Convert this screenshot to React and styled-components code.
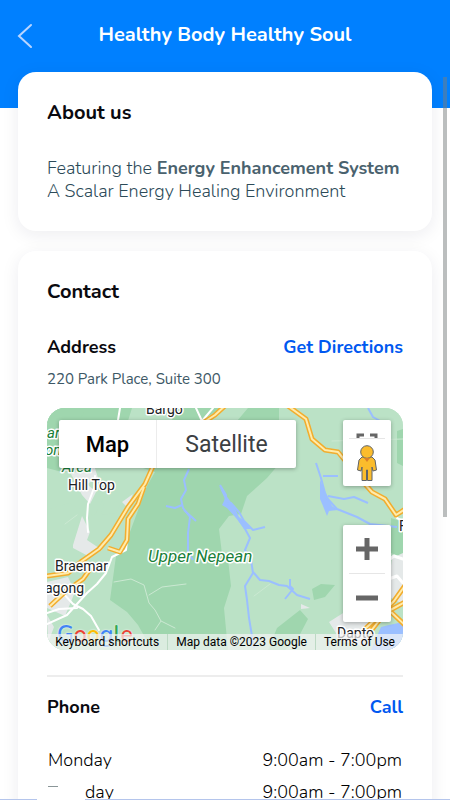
import React from "react";
import styled, { createGlobalStyle } from "styled-components";

const GlobalStyle = createGlobalStyle`
  * { box-sizing: border-box; }
  body { margin: 0; background: #fff; font-family: "Nunito", "Lato", sans-serif; color: #0a0a0f; }
  button { font: inherit; border: 0; padding: 0; background: none; cursor: pointer; }
  h1, h2, h3, p, dl, dt, dd { margin: 0; }
`;

const Page = styled.div`
  position: relative;
  height: 100vh;
  overflow: hidden;
  background: #fff;
`;

const Header = styled.header`
  display: grid;
  grid-template-columns: 50px 1fr 50px;
  align-items: center;
  height: 108px;
  padding-bottom: 36px;
  background: #0080ff;
`;

const BackButton = styled.button`
  display: flex;
  justify-content: center;
  color: #b9d5ff;
`;

const Title = styled.h1`
  padding-bottom: 2px;
  font-size: 20px;
  line-height: 28px;
  font-weight: 700;
  text-align: center;
  color: #fff;
`;

const Cards = styled.main`
  display: flex;
  flex-direction: column;
  gap: 20px;
  margin-top: -36px;
  padding: 0 18px;
`;

const Card = styled.section`
  padding: 28px 29px;
  border-radius: 18px;
  background: #fff;
  box-shadow: 0 4px 18px rgba(30, 30, 70, 0.08);
`;

const CardTitle = styled.h2`
  font-size: 20px;
  line-height: 26px;
  font-weight: 700;
`;

const Intro = styled.p`
  margin-top: 31px;
  font-size: 18px;
  line-height: 23px;
  font-weight: 300;
  color: #2c4a58;

  strong {
    font-weight: 700;
    color: #4a626e;
  }
`;

const Row = styled.div`
  display: flex;
  justify-content: space-between;
  align-items: center;
  font-size: 18px;
  line-height: 24px;
`;

const AddressRow = styled(Row)`
  margin-top: 30px;
`;

const Label = styled.h3`
  font-size: 18px;
  font-weight: 700;
`;

const ActionLink = styled.a`
  font-weight: 700;
  color: #0058f0;
  text-decoration: none;
`;

const Street = styled.p`
  margin: 10px 0 19px;
  font-size: 15px;
  line-height: 20px;
  color: #3d5866;
`;

const MapFrame = styled.div`
  position: relative;
  height: 242px;
  overflow: hidden;
  border-radius: 18px;
  background: #bbe2c6;
  font-family: Roboto, sans-serif;
`;

const MapDrawing = styled.svg`
  display: block;
  width: 100%;
  height: 100%;
`;

const MapTypes = styled.div`
  position: absolute;
  top: 12px;
  left: 12px;
  display: flex;
  height: 48px;
  border-radius: 2px;
  overflow: hidden;
  background: #fff;
  box-shadow: 0 1px 4px rgba(0, 0, 0, 0.3);
`;

const MapType = styled.button`
  width: ${(p) => (p.$active ? 98 : 139)}px;
  font-size: ${(p) => (p.$active ? 22 : 23)}px;
  font-weight: ${(p) => (p.$active ? 500 : 400)};
  color: ${(p) => (p.$active ? "#000" : "#3c4043")};
  border-right: ${(p) => (p.$active ? "1px solid #ececec" : "0")};
`;

const ControlStack = styled.div`
  position: absolute;
  right: 12px;
  ${(p) => (p.$low ? "bottom: 28px;" : "top: 12px;")}
  display: flex;
  flex-direction: column;
  align-items: center;
  width: 48px;
  border-radius: 2px;
  background: #fff;
  box-shadow: 0 1px 4px rgba(0, 0, 0, 0.3);
`;

const Control = styled.button`
  display: flex;
  align-items: center;
  justify-content: center;
  width: 36px;
  height: ${(p) => p.$height}px;
  & + & { border-top: 1px solid #e6e6e6; }
`;

const MapFooter = styled.div`
  position: absolute;
  right: 0;
  bottom: 0;
  left: 0;
  display: flex;
  justify-content: flex-end;
  height: 16px;
  font-size: 12px;
  line-height: 16px;
  color: #000;
`;

const FooterItem = styled.span`
  padding: 0 8px;
  background: rgba(245, 245, 245, 0.7);
  color: inherit;
  white-space: nowrap;
  & + & { border-left: 1px solid #bcd9c4; }
`;

const ShortcutsButton = styled.button`
  flex: 1;
  padding: 0 8px;
  background: rgba(245, 245, 245, 0.7);
  text-align: right;
  white-space: nowrap;
  border-right: 1px solid #bcd9c4;
`;

const PhoneRow = styled(Row)`
  margin-top: 25px;
  padding-top: 18px;
  border-top: 2px solid #ededed;
`;

const Hours = styled.dl`
  display: grid;
  grid-template-columns: 1fr auto;
  row-gap: 8px;
  margin-top: 29px;
  padding: 0 1px;
  font-size: 18px;
  line-height: 24px;
  font-weight: 300;
  color: #000;
`;

const Day = styled.dt`
  display: flex;
  align-items: center;
  gap: 27px;
`;

const Dash = styled.span`
  align-self: flex-start;
  width: 10px;
  height: 1px;
  margin-top: 6px;
  background: #8a9698;
`;

const ScrollThumb = styled.div`
  position: absolute;
  top: 77px;
  right: 3px;
  width: 4px;
  height: 55%;
  background: rgba(120, 125, 125, 0.5);
`;

const BottomEdge = styled.div`
  position: absolute;
  right: 0;
  bottom: 0;
  left: 0;
  height: 1px;
  background: linear-gradient(to right, #b4c5ec 37px, #fff 37px 85px, #b4c5ec 85px);
`;

const land = "#9fd6ae";
const water = "#9bbfff";

const roadPaths = [
  "M180 -4 L168 7 L148 20 M107 56 L98 76 L81 99 L64 127 L52 141 L35 153 L21 165 L0 168",
  "M97 79 L91 96 L81 111 L80 132 L73 144 L61 140",
  "M46 157 L36 171 L18 184 L3 198",
  "M241 -2 L259 11 L265 31 L278 42 L291 44 L310 67 L325 84 L338 91 L349 107 L360 100",
  "M362 172 L347 193 L335 205 L318 221 M360 193 L338 205 L320 228 M344 204 L360 219",
];

const riverPaths = [
  "M142 61 L137 72 L139 82 L134 91 L136 100 L143 109 L141 125 L141 145 L146 152",
  "M119 98 L128 100 L135 97 M137 102 L149 113",
  "M173 77 L179 87 L178 96 L184 95 L192 104 L197 113 L206 122 L218 119 M189 108 L197 119 L203 130 L198 142 L204 152 L206 165 L198 178 L200 192 L202 210 L207 240",
  "M206 164 L213 172 L222 173 L232 177 L240 178 L250 187 L263 191 M243 171 L243 178 L246 181 L238 191",
  "M269 55 L274 70 L279 89 L290 101 L310 109 L323 116 L350 119 M281 88 L297 91 L307 89 L321 95 M276 68 L291 68",
  "M321 0 L326 9 L335 14",
];

function MapBackground() {
  return (
    <MapDrawing viewBox="0 0 356 242" preserveAspectRatio="xMidYMid slice" role="img" aria-label="Map of Upper Nepean">
      <rect width="356" height="242" fill="#bbe2c6" />
      <path fill={land} d="M0 0H232V18L206 22L232 56L220 70L200 88L194 106L182 108L172 121L175 146L181 151L184 178L177 200L181 242H105L91 217L80 204L63 192L69 148L80 132L100 78L108 64L60 48L0 70Z" />
      <path fill="#bbe2c6" d="M85 0H130L122 18L150 15L175 0H201L190 13H120L105 28L80 16ZM0 60L30 68L38 84L52 75L58 88L47 108L22 95L0 102ZM57 96L75 93L69 105L54 107Z" />
      <path fill={land} d="M0 0L39 0L31 15L0 15ZM265 181L274 176L288 177L278 189L267 192ZM350 23L356 21V58L350 55ZM344 110L356 114V150L344 145ZM253 202L261 211L250 232L238 242H221L230 220Z" />
      <path fill={water} d="M172 78L181 90L188 100L192 109L199 114L204 121L197 121L190 111L180 100L175 97L178 91ZM273 72L277 81L281 89L285 98L291 102L282 103L280 108L276 98L273 91ZM334 219L342 217L356 214V242H324Z" />
      <g fill="#e5e9e9">
        <path d="M24 66L47 57L51 70L40 76L49 84L43 96L35 87ZM26 137L35 108L43 124L40 132L55 142L43 149L26 140ZM0 174L21 169L28 184L18 208L0 200ZM0 207L7 219L1 235ZM345 150L356 145V196L340 188ZM282 214L304 200L324 207L320 239L294 233Z" />
        <path d="M75 94L86 86L80 99ZM254 196L263 200L254 201Z" />
      </g>
      <g fill="none" stroke="#fff" strokeWidth="2" strokeLinecap="round" strokeLinejoin="round">
        <path d="M73 0L70 18M149 0L155 13L166 0M48 68L47 80L41 96L40 110L41 124M80 133L79 142L65 149L59 165L50 176L40 185L20 207L0 216M15 184L26 196L36 201L44 208L52 222M0 205L12 201L30 200" />
        <path stroke="#cbe8d2" strokeWidth="1" d="M67 174L84 171L97 177L102 195L108 202L114 213L108 222M102 187L115 179L139 176M114 213L128 220M30 107L18 116M207 188L223 176M285 33L356 31" />
        <path d="M338 91L350 110L356 113" />
        <path strokeWidth="3" d="M335 157L347 148L356 151M336 173L350 168L356 175" />
      </g>
      <g fill="none" stroke={water} strokeWidth="2" strokeLinejoin="round">
        {riverPaths.map((d) => <path key={d} d={d} />)}
      </g>
      <g fill="none" strokeLinejoin="round">
        {roadPaths.map((d) => <path key={d} d={d} stroke="#f2ad2e" strokeWidth="5" />)}
        {roadPaths.map((d) => <path key={d} d={d} stroke="#ffebab" strokeWidth="2" />)}
      </g>
      <g fontFamily="Roboto, sans-serif" fontSize="14" fill="#202124" stroke="#fff" strokeWidth="3" strokeLinejoin="round" paintOrder="stroke">
        <text x="99" y="6">Bargo</text>
        <text x="21" y="82">Hill Top</text>
        <text x="8" y="163">Braemar</text>
        <text x="-2" y="185">agong</text>
        <text x="290" y="230">Dapto</text>
        <text x="352" y="123">Fi</text>
        <g fill="#188038" fontStyle="italic">
          <text x="0" y="30" fontSize="15">ar</text>
          <text x="-2" y="47" fontSize="15">on</text>
          <text x="15" y="64" fontSize="15">Area</text>
          <text x="101" y="154" fontSize="17">Upper Nepean</text>
        </g>
      </g>
    </MapDrawing>
  );
}

const GoogleMark = styled.span`
  position: absolute;
  left: 10px;
  bottom: 2px;
  font-family: Nunito, sans-serif;
  font-size: 23px;
  line-height: 26px;
  font-weight: 600;
  text-shadow: 0 0 2px #fff;
`;

const Letter = styled.span`
  color: ${(p) => p.$color};
`;

const googleLetters = [["G", "#4285f4"], ["o", "#ea4335"], ["o", "#fbbc04"], ["g", "#4285f4"], ["l", "#34a853"], ["e", "#ea4335"]];

function AddressMap() {
  return (
    <MapFrame>
      <MapBackground />
      <GoogleMark>{googleLetters.map(([c, color], i) => <Letter key={i} $color={color}>{c}</Letter>)}</GoogleMark>
      <MapTypes>
        <MapType $active>Map</MapType>
        <MapType>Satellite</MapType>
      </MapTypes>
      <ControlStack>
        <Control $height={18} aria-label="Fullscreen">
          <svg width="22" height="18" fill="none" stroke="#666" strokeWidth="3"><path d="M2 19V15H8M14 15H20V19" /></svg>
        </Control>
        <Control $height={48} aria-label="Street View">
          <svg width="20" height="36" viewBox="0 0 20 36" stroke="#5f6368" strokeWidth="1" fill="#fbbc2c" strokeLinejoin="round">
            <path d="M5 12H15L18 15L19.5 25L16 26L15 22V35.5H10.5V25H9.5V35.5H5V22L4 26L0.5 25L2 15Z" />
            <circle cx="10" cy="7" r="6.3" />
            <path d="M7 13H13L10 17Z" fill="#dc7f29" stroke="none" />
          </svg>
        </Control>
      </ControlStack>
      <ControlStack $low>
        <Control $height={48} aria-label="Zoom in">
          <svg width="22" height="22" stroke="#666" strokeWidth="5"><path d="M0 11H22M11 0V22" /></svg>
        </Control>
        <Control $height={49} aria-label="Zoom out">
          <svg width="22" height="22" stroke="#666" strokeWidth="5"><path d="M0 11H22" /></svg>
        </Control>
      </ControlStack>
      <MapFooter>
        <ShortcutsButton>Keyboard shortcuts</ShortcutsButton>
        <FooterItem>Map data ©2023 Google</FooterItem>
        <FooterItem>Terms of Use</FooterItem>
      </MapFooter>
    </MapFrame>
  );
}

export default function App() {
  return (
    <Page>
      <GlobalStyle />
      <Header>
        <BackButton aria-label="Back">
          <svg width="16" height="26" fill="none" stroke="currentColor" strokeWidth="2" strokeLinecap="round"><path d="M14 2L2 13L14 24" /></svg>
        </BackButton>
        <Title>Healthy Body Healthy Soul</Title>
      </Header>
      <Cards>
        <Card>
          <CardTitle>About us</CardTitle>
          <Intro>Featuring the <strong>Energy Enhancement System</strong><br />A Scalar Energy Healing Environment</Intro>
        </Card>
        <Card>
          <CardTitle>Contact</CardTitle>
          <AddressRow>
            <Label>Address</Label>
            <ActionLink href="#directions">Get Directions</ActionLink>
          </AddressRow>
          <Street>220 Park Place, Suite 300</Street>
          <AddressMap />
          <PhoneRow>
            <Label>Phone</Label>
            <ActionLink href="#call">Call</ActionLink>
          </PhoneRow>
          <Hours>
            <Day>Monday</Day>
            <dd>9:00am - 7:00pm</dd>
            <Day><Dash />day</Day>
            <dd>9:00am - 7:00pm</dd>
          </Hours>
        </Card>
      </Cards>
      <ScrollThumb />
      <BottomEdge />
    </Page>
  );
}
